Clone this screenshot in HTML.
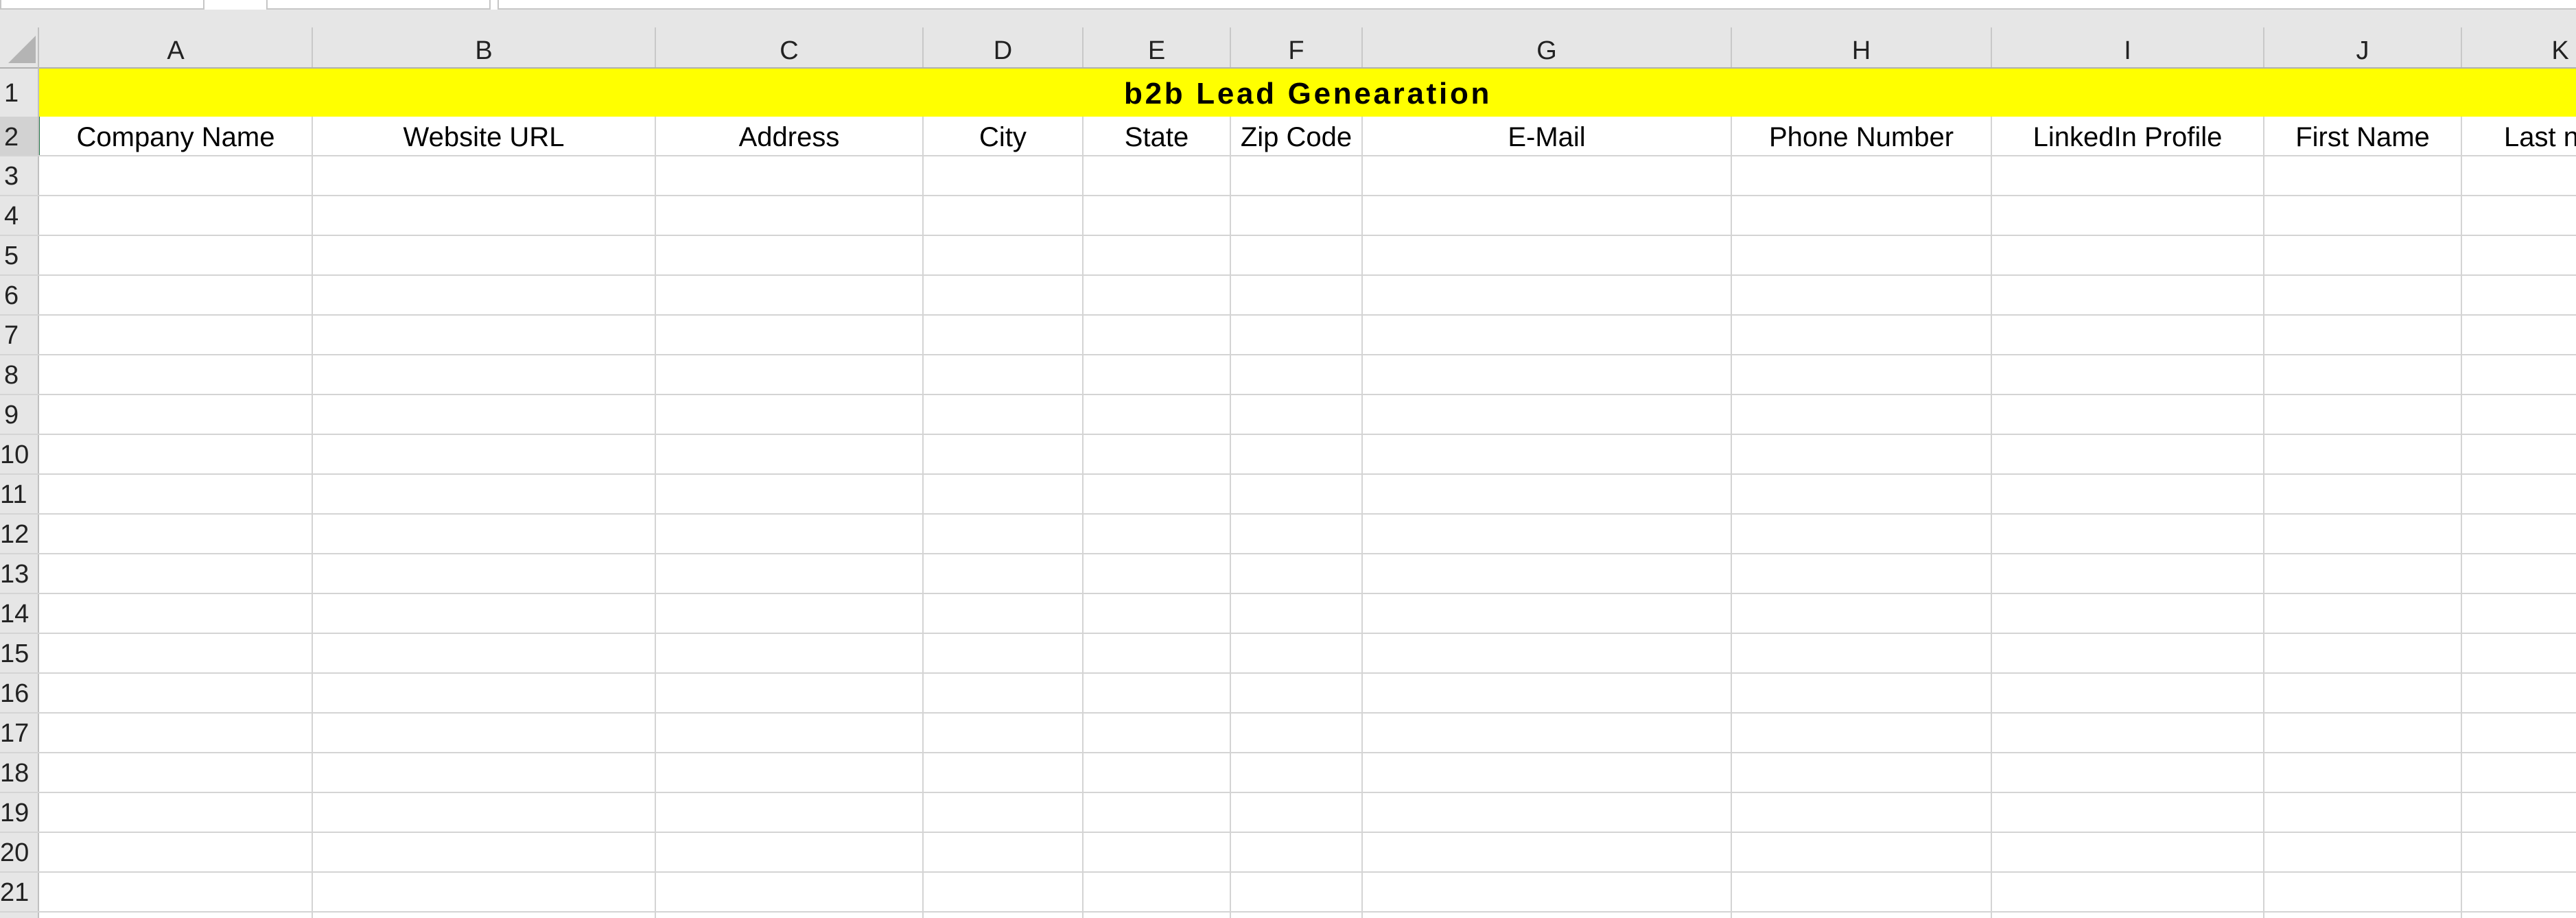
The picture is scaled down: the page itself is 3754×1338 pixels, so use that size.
<!DOCTYPE html>
<html><head><meta charset="utf-8"><style>
*{margin:0;padding:0;box-sizing:border-box}
body{width:3754px;height:1338px;overflow:hidden;background:#fff;position:relative;font-family:"Liberation Sans",sans-serif;color:#000}
.a{position:absolute}
.hl{position:absolute;height:2px;background:#d4d4d4}
.vl{position:absolute;width:2px;background:#d4d4d4}
.ch{position:absolute;top:40px;height:60px;line-height:68px;text-align:center;font-size:38px;color:#222}
.rn{position:absolute;left:6px;font-size:38px;height:58px;line-height:60px;color:#222}
.t2{position:absolute;top:170px;height:57px;line-height:60px;text-align:center;font-size:40px;white-space:nowrap;overflow:hidden}
</style></head><body>
<div class="a" style="left:0;top:0;width:3754px;height:14px;background:#fff"></div>
<div class="a" style="left:0;top:0;width:298px;height:14px;border:2px solid #c6c6c6;border-top:none"></div>
<div class="a" style="left:388px;top:0;width:327px;height:14px;border:2px solid #c6c6c6;border-top:none"></div>
<div class="a" style="left:725px;top:0;width:3040px;height:14px;border:2px solid #c6c6c6;border-top:none"></div>
<div class="a" style="left:0;top:14px;width:3754px;height:86px;background:#e6e6e6"></div>
<div class="a" style="left:0;top:100px;width:57px;height:1238px;background:#e6e6e6"></div>
<div class="a" style="left:0;top:170px;width:57px;height:57px;background:#d2d2d2"></div>
<div class="a" style="left:55px;top:170px;width:3px;height:57px;background:#217346"></div>
<svg class="a" style="left:8px;top:50px" width="46" height="44"><polygon points="44,2 44,42 4,42" fill="#b4b4b4"/></svg>
<div class="a" style="left:57px;top:100px;width:3697px;height:70px;background:#ffff00"></div>
<div class="a" style="left:1638px;top:100px;width:640px;height:70px;line-height:74px;font-weight:bold;font-size:44px;letter-spacing:3.7px;white-space:nowrap">b2b Lead Genearation</div>
<div class="vl" style="left:454px;top:40px;height:60px;background:#c8c8c8"></div>
<div class="vl" style="left:954px;top:40px;height:60px;background:#c8c8c8"></div>
<div class="vl" style="left:1344px;top:40px;height:60px;background:#c8c8c8"></div>
<div class="vl" style="left:1577px;top:40px;height:60px;background:#c8c8c8"></div>
<div class="vl" style="left:1792px;top:40px;height:60px;background:#c8c8c8"></div>
<div class="vl" style="left:1984px;top:40px;height:60px;background:#c8c8c8"></div>
<div class="vl" style="left:2522px;top:40px;height:60px;background:#c8c8c8"></div>
<div class="vl" style="left:2901px;top:40px;height:60px;background:#c8c8c8"></div>
<div class="vl" style="left:3298px;top:40px;height:60px;background:#c8c8c8"></div>
<div class="vl" style="left:3586px;top:40px;height:60px;background:#c8c8c8"></div>
<div class="a" style="left:0;top:98px;width:3754px;height:2px;background:#b0b0b0"></div>
<div class="a" style="left:55px;top:40px;width:2px;height:1298px;background:#c0c0c0"></div>
<div class="ch" style="left:57px;width:398px">A</div>
<div class="ch" style="left:455px;width:500px">B</div>
<div class="ch" style="left:955px;width:390px">C</div>
<div class="ch" style="left:1345px;width:233px">D</div>
<div class="ch" style="left:1578px;width:215px">E</div>
<div class="ch" style="left:1793px;width:192px">F</div>
<div class="ch" style="left:1985px;width:538px">G</div>
<div class="ch" style="left:2523px;width:379px">H</div>
<div class="ch" style="left:2902px;width:397px">I</div>
<div class="ch" style="left:3299px;width:288px">J</div>
<div class="ch" style="left:3587px;width:288px">K</div>
<div class="vl" style="left:454px;top:170px;height:1168px"></div>
<div class="vl" style="left:954px;top:170px;height:1168px"></div>
<div class="vl" style="left:1344px;top:170px;height:1168px"></div>
<div class="vl" style="left:1577px;top:170px;height:1168px"></div>
<div class="vl" style="left:1792px;top:170px;height:1168px"></div>
<div class="vl" style="left:1984px;top:170px;height:1168px"></div>
<div class="vl" style="left:2522px;top:170px;height:1168px"></div>
<div class="vl" style="left:2901px;top:170px;height:1168px"></div>
<div class="vl" style="left:3298px;top:170px;height:1168px"></div>
<div class="vl" style="left:3586px;top:170px;height:1168px"></div>
<div class="hl" style="left:0;top:226px;width:3754px"></div>
<div class="hl" style="left:0;top:284px;width:3754px"></div>
<div class="hl" style="left:0;top:342px;width:3754px"></div>
<div class="hl" style="left:0;top:400px;width:3754px"></div>
<div class="hl" style="left:0;top:458px;width:3754px"></div>
<div class="hl" style="left:0;top:516px;width:3754px"></div>
<div class="hl" style="left:0;top:574px;width:3754px"></div>
<div class="hl" style="left:0;top:632px;width:3754px"></div>
<div class="hl" style="left:0;top:690px;width:3754px"></div>
<div class="hl" style="left:0;top:748px;width:3754px"></div>
<div class="hl" style="left:0;top:806px;width:3754px"></div>
<div class="hl" style="left:0;top:864px;width:3754px"></div>
<div class="hl" style="left:0;top:922px;width:3754px"></div>
<div class="hl" style="left:0;top:980px;width:3754px"></div>
<div class="hl" style="left:0;top:1038px;width:3754px"></div>
<div class="hl" style="left:0;top:1096px;width:3754px"></div>
<div class="hl" style="left:0;top:1154px;width:3754px"></div>
<div class="hl" style="left:0;top:1212px;width:3754px"></div>
<div class="hl" style="left:0;top:1270px;width:3754px"></div>
<div class="hl" style="left:0;top:1328px;width:3754px"></div>
<div class="t2" style="left:57px;width:398px">Company Name</div>
<div class="t2" style="left:455px;width:500px">Website URL</div>
<div class="t2" style="left:955px;width:390px">Address</div>
<div class="t2" style="left:1345px;width:233px">City</div>
<div class="t2" style="left:1578px;width:215px">State</div>
<div class="t2" style="left:1793px;width:192px">Zip Code</div>
<div class="t2" style="left:1985px;width:538px">E-Mail</div>
<div class="t2" style="left:2523px;width:379px">Phone Number</div>
<div class="t2" style="left:2902px;width:397px">LinkedIn Profile</div>
<div class="t2" style="left:3299px;width:288px">First Name</div>
<div class="t2" style="left:3587px;width:288px;text-align:left;padding-left:62px">Last name</div>
<div class="rn" style="top:106px">1</div>
<div class="rn" style="top:170px">2</div>
<div class="rn" style="top:227px">3</div>
<div class="rn" style="top:285px">4</div>
<div class="rn" style="top:343px">5</div>
<div class="rn" style="top:401px">6</div>
<div class="rn" style="top:459px">7</div>
<div class="rn" style="top:517px">8</div>
<div class="rn" style="top:575px">9</div>
<div class="rn" style="top:633px;left:0">10</div>
<div class="rn" style="top:691px;left:0">11</div>
<div class="rn" style="top:749px;left:0">12</div>
<div class="rn" style="top:807px;left:0">13</div>
<div class="rn" style="top:865px;left:0">14</div>
<div class="rn" style="top:923px;left:0">15</div>
<div class="rn" style="top:981px;left:0">16</div>
<div class="rn" style="top:1039px;left:0">17</div>
<div class="rn" style="top:1097px;left:0">18</div>
<div class="rn" style="top:1155px;left:0">19</div>
<div class="rn" style="top:1213px;left:0">20</div>
<div class="rn" style="top:1271px;left:0">21</div>
</body></html>
